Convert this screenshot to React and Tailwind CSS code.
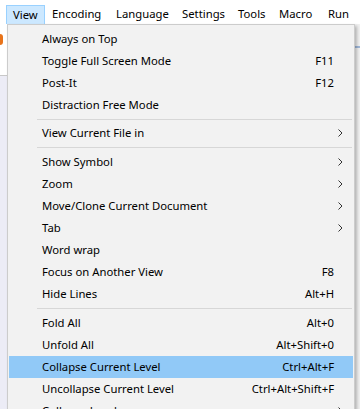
import React from "react";

const items = [
  { t: "Always on Top" },
  { t: "Toggle Full Screen Mode", k: "F11" },
  { t: "Post-It", k: "F12" },
  { t: "Distraction Free Mode" },
  { sep: true, h: "h-[6px]" },
  { t: "View Current File in", sub: true },
  { sep: true, h: "h-[7px]" },
  { t: "Show Symbol", sub: true },
  { t: "Zoom", sub: true },
  { t: "Move/Clone Current Document", sub: true },
  { t: "Tab", sub: true },
  { t: "Word wrap" },
  { t: "Focus on Another View", k: "F8" },
  { t: "Hide Lines", k: "Alt+H" },
  { sep: true, h: "h-[7px]" },
  { t: "Fold All", k: "Alt+0" },
  { t: "Unfold All", k: "Alt+Shift+0" },
  { t: "Collapse Current Level", k: "Ctrl+Alt+F", active: true },
  { t: "Uncollapse Current Level", k: "Ctrl+Alt+Shift+F" },
  { t: "Collapse Level", sub: true },
  { t: "Uncollapse Level", sub: true },
];

const menus = [
  { m: "View", w: "w-[39px]" },
  { m: "Encoding", w: "w-[64px]" },
  { m: "Language", w: "w-[66px]" },
  { m: "Settings", w: "w-[56px]" },
  { m: "Tools", w: "w-[41px]" },
  { m: "Macro", w: "w-[49px]" },
  { m: "Run", w: "w-[36px]" },
];

function Chevron() {
  return (
    <svg width="5" height="8" viewBox="0 0 5 8" className="block">
      <path d="M0.5 0.5 L4 4 L0.5 7.5" fill="none" stroke="#333" strokeWidth="1" />
    </svg>
  );
}

export default function App() {
  const font = { fontFamily: '"Noto Sans", "Segoe UI", sans-serif' };
  return (
    <div className="relative w-[360px] h-[409px] overflow-hidden bg-white text-[11.3px] text-black" style={font}>
      {/* menu bar */}
      <div className="flex h-[24px] items-end bg-white pl-[6px]">
        {menus.map(({ m, w }, i) => (
          <div
            key={m}
            className={
              i === 0
                ? `${w} h-[19px] shrink-0 flex items-center pl-[6px] border border-b-0 border-[#99d1ff] bg-[#cce8ff]`
                : `${w} h-[19px] shrink-0 flex items-center pl-[6px] border border-transparent`
            }
          >
            {m}
          </div>
        ))}
      </div>
      {/* background window */}
      <div className="flex h-[385px]">
        <div className="w-[7px] flex flex-col">
          <div className="h-[51px] bg-white relative">
            <div className="absolute left-0 top-[10px] w-[3px] h-[11px] rounded-r bg-[#e8731a]" />
          </div>
          <div className="h-px bg-[#c8c8c8]" />
          <div className="flex-1 bg-[#ececf6]" />
        </div>
        <div className="flex-1" />
        <div className="w-[6px] border-l border-[#cfcfcf] bg-[#f0f0f0] flex flex-col">
          <div className="h-[22px]" />
          <div className="h-[2px] bg-[#9fb7d8]" />
        </div>
      </div>
      {/* dropdown */}
      <div className="absolute left-[7px] top-[24px] w-[348px] h-[420px] bg-[#f2f2f2] border border-[#cccccc] py-[3px] px-[1px] shadow-[2px_2px_3px_rgba(0,0,0,0.25)]">
        {items.map((it, i) =>
          it.sep ? (
            <div key={i} className={`${it.h} flex items-center pl-[28px] pr-[1px]`}>
              <div className="h-px w-full bg-[#d7d7d7]" />
            </div>
          ) : (
            <div
              key={i}
              className={`h-[22px] flex items-center pl-[33px] pr-[19px] ${it.active ? "bg-[#91c9f7]" : ""}`}
            >
              <span className="flex-1 whitespace-nowrap">{it.t}</span>
              {it.k && <span className="whitespace-nowrap">{it.k}</span>}
              {it.sub && (
                <span className="mr-[-9px]">
                  <Chevron />
                </span>
              )}
            </div>
          )
        )}
      </div>
    </div>
  );
}
